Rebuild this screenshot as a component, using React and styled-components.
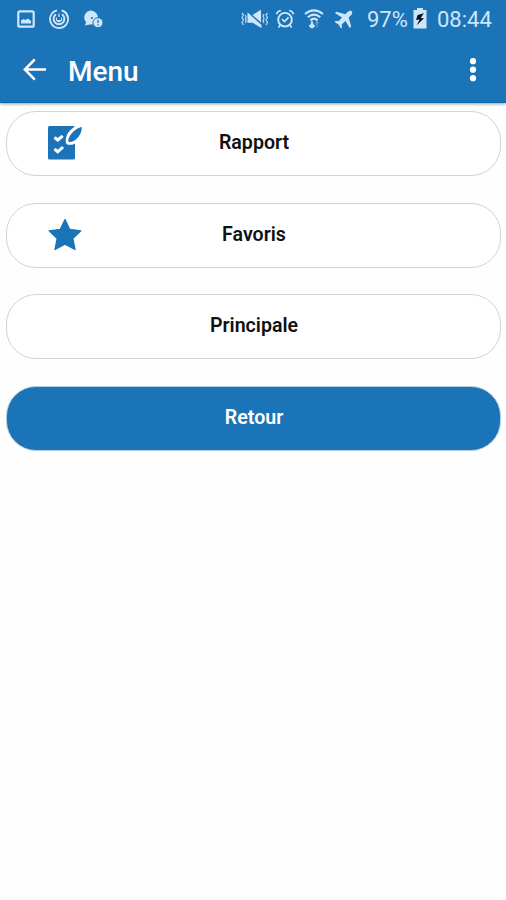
import React from 'react'
import styled, { createGlobalStyle } from 'styled-components'

const items = [
  { label: 'Rapport', icon: 'report' },
  { label: 'Favoris', icon: 'star' },
  { label: 'Principale' },
  { label: 'Retour', primary: true },
]

function StatusBar() {
  return (
    <Status>
      <StatusGroup $gap="14px">
        <svg width="18" height="18" viewBox="0 0 18 18">
          <rect x="1.3" y="1.3" width="15.4" height="15.4" rx="1.5" fill="none" stroke="currentColor" strokeWidth="2.2" />
          <path d="M4 13.5V10.5L6.5 9L8.5 10L11 8.5L14 11V13.5Z" fill="currentColor" />
        </svg>
        <svg width="20" height="20" viewBox="0 0 20 20" fill="none" stroke="currentColor">
          <path d="M8 1.3A9 9 0 1 0 12.5 1.4" strokeWidth="1.8" />
          <path d="M13.5 1.7A9 9 0 0 1 18.8 8" strokeWidth="1.8" />
          <path d="M7 5.4A5.4 5.4 0 1 0 13 5.4" strokeWidth="2" />
          <path d="M8 8A3 3 0 1 0 12 8V11H8Z" fill="currentColor" stroke="none" />
          <path d="M10 4.5V8" strokeWidth="1.2" />
        </svg>
        <svg width="21" height="20" viewBox="0 0 21 20">
          <path d="M8.5 1.5A7.3 7 0 1 1 6.5 15.5L2 16.5L3 13A7.3 7 0 0 1 8.5 1.5Z" fill="currentColor" />
          <circle cx="9" cy="9" r="1.1" fill="#1b74b7" />
          <circle cx="15" cy="13.7" r="5" fill="currentColor" stroke="#1b74b7" strokeWidth="1" />
          <path d="M15 10.8V14M15 15.2V16.6" stroke="#1b74b7" strokeWidth="1.3" />
        </svg>
      </StatusGroup>
      <StatusGroup>
        <svg width="28" height="20" viewBox="0 0 28 20">
          <path d="M6.5 3.2V13.8H11.5L20.5 19V16Z" fill="currentColor" />
          <path d="M11.5 6L20 .8V13.6Z" fill="currentColor" />
          <path d="M1 4L2.5 6L1 8.5L2.5 11L1 13.5L2.5 16M4.3 6L5.3 8L4.3 10L5.3 12L4.3 14M26.5 4L25 6L26.5 8.5L25 11L26.5 13.5L25 16M23 5L22 7L23 9.5L22 12L23 14" fill="none" stroke="currentColor" strokeWidth="1.3" opacity=".85" />
        </svg>
        <AlarmIcon width="20" height="20" viewBox="0 0 20 20" fill="none" stroke="currentColor">
          <circle cx="10" cy="10.7" r="6.8" strokeWidth="1.9" />
          <path d="M7 10L9.5 12.5L13.5 8.3" strokeWidth="1.7" />
          <path d="M1.5 5.3Q2.3 2 5.8 1.5M18.5 5.3Q17.7 2 14.2 1.5M5 16.2L3.5 18.5M15 16.2L16.5 18.5" strokeWidth="1.7" />
        </AlarmIcon>
        <WifiIcon width="20" height="20" viewBox="0 0 20 20" fill="none" stroke="currentColor">
          <path d="M1 5Q10 -2.4 19 5M3.8 8.3Q10 2.8 16.2 8.3M6.4 11.5Q10 7.8 13.6 11.5" strokeWidth="2.2" />
          <path d="M8 12.5V18M8 18.8L5.5 16M8 18.8L10.5 16" strokeWidth="2.2" />
          <path d="M13 18.5V12.5M13 12.5L11.5 14.5M13 12.5L14.7 14.5" strokeWidth="1" opacity=".45" />
        </WifiIcon>
        <PlaneIcon width="19" height="19" viewBox="0 0 19 19">
          <path d="M17.7 1.2C16.5 .2 14.9 .8 13.9 1.8L11.4 4.3L2.3 1.7L.9 3.1L8 7.6L4.6 11.3L1.7 10.8L.6 11.9L4.6 14.4L7 18.4L8.1 17.3L7.7 14.4L11.4 11L15.8 18L17.2 16.6L14.7 7.6L17.2 5.1C18.2 4.1 18.7 2.3 17.7 1.2Z" fill="currentColor" />
        </PlaneIcon>
        <StatusText $width="42px" $left="14px">97%</StatusText>
        <BatteryIcon width="14" height="21" viewBox="0 0 14 21">
          <path d="M4 0H10V2H13.5V20.5H.5V2H4Z" fill="currentColor" />
          <path d="M10.8 5.3L4.6 7L3 12L6.5 11.5L3.8 17.3L11 10.2L7.8 9.9Z" fill="#071422" />
        </BatteryIcon>
        <StatusText $width="56px" $left="10px">08:44</StatusText>
      </StatusGroup>
    </Status>
  )
}

function ReportIcon() {
  return (
    <svg width="36" height="36" viewBox="0 0 36 36">
      <rect x="1" y="1" width="27" height="33.5" rx="1.5" fill="#1b74b7" />
      <path d="M7.5 12.5L10.8 15L15.7 10.8M7.5 24L10.8 26.8L16 22" fill="none" stroke="#fff" strokeWidth="3" />
      <path d="M34 2C27.5 3 20 9.5 21.3 17.3C27.5 18.5 33.5 12 34 2Z" fill="#fff" stroke="#fff" strokeWidth="4.8" strokeLinejoin="round" />
      <path d="M34.8 2C32.5 2 25 6 22 12.5C20.6 15.8 21 17.6 23.8 17C30.2 15.2 35 9 34.8 2Z" fill="#1b74b7" />
    </svg>
  )
}

function StarIcon() {
  return (
    <svg width="36" height="36" viewBox="0 0 36 36">
      <path d="M18 3.6L22.8 13.5L33.8 14.8L25.8 22.5L28 33.5L18 28.2L8 33.5L10.2 22.5L2.2 14.8L13.2 13.5Z" fill="#1b74b7" stroke="#1b74b7" strokeWidth="1.3" strokeLinejoin="round" />
    </svg>
  )
}

function App() {
  return (
    <Page>
      <GlobalStyle />
      <Header>
        <StatusBar />
        <Toolbar>
          <IconButton aria-label="Retour">
            <svg width="24" height="24" viewBox="0 0 24 24" fill="none" stroke="currentColor" strokeWidth="2.5">
              <path d="M23 11.5H2M11.8 1.3L1.8 11.5L11.8 21.7" />
            </svg>
          </IconButton>
          <Title>Menu</Title>
          <IconButton aria-label="Options">
            <svg width="8" height="26" viewBox="0 0 8 26" fill="currentColor">
              <circle cx="4" cy="4.2" r="3.1" />
              <circle cx="4" cy="12.7" r="3.1" />
              <circle cx="4" cy="21.2" r="3.1" />
            </svg>
          </IconButton>
        </Toolbar>
      </Header>
      <MenuList>
        {items.map((item) => (
          <MenuButton key={item.label} $primary={item.primary}>
            <IconSlot>
              {item.icon === 'report' && <ReportIcon />}
              {item.icon === 'star' && <StarIcon />}
            </IconSlot>
            <Label>{item.label}</Label>
          </MenuButton>
        ))}
      </MenuList>
    </Page>
  )
}

export default App

const GlobalStyle = createGlobalStyle`
  * {
    box-sizing: border-box;
  }
  body {
    margin: 0;
    background: #fefefe;
    font-family: Roboto, "Liberation Sans", sans-serif;
  }
  svg {
    display: block;
    flex-shrink: 0;
  }
`

const Page = styled.div`
  min-height: 900px;
  background: #fefefe;
`

const Header = styled.header`
  height: 103px;
  background: #1b74b7;
  border-bottom: 1px solid #0a68b0;
  box-shadow: 0 1px 3px rgba(0, 0, 0, 0.4);
  color: #fff;
`

const Status = styled.div`
  height: 38px;
  padding: 0 13px 0 17px;
  display: flex;
  align-items: center;
  justify-content: space-between;
  color: #cfe6fa;
`

const StatusGroup = styled.div`
  display: flex;
  align-items: center;
  gap: ${props => props.$gap || 0};
`

const AlarmIcon = styled.svg`
  margin-left: 6px;
`

const WifiIcon = styled.svg`
  margin-left: 9px;
`

const PlaneIcon = styled.svg`
  margin-left: 10px;
`

const BatteryIcon = styled.svg`
  margin: 0 0 2px 4px;
`

const StatusText = styled.span`
  width: ${props => props.$width};
  margin-left: ${props => props.$left};
  font-size: 22px;
  line-height: 26px;
  white-space: nowrap;
  padding-top: 2px;
`

const Toolbar = styled.div`
  height: 64px;
  padding: 0 29px 0 23px;
  display: flex;
  align-items: center;
`

const IconButton = styled.button`
  padding: 0;
  border: 0;
  background: none;
  color: inherit;
`

const Title = styled.h1`
  flex: 1;
  margin: 0 0 0 21px;
  padding-top: 3px;
  font-size: 28px;
  font-weight: 500;
  line-height: 32px;
`

const MenuList = styled.main`
  padding: 8px 5px 0 6px;
  display: flex;
  flex-direction: column;
  gap: 26.5px;
`

const MenuButton = styled.button`
  width: 100%;
  height: 65px;
  padding: 0 39px 0 40px;
  display: grid;
  grid-template-columns: 36px 1fr 36px;
  align-items: center;
  border: 1.5px solid ${props => props.$primary ? '#b5cfe1' : '#d3d3d0'};
  border-radius: 30px;
  background: ${props => props.$primary ? '#1b74b7' : '#fff'};
  color: ${props => props.$primary ? '#fff' : '#111'};
  font-family: inherit;
`

const IconSlot = styled.span`
  display: flex;
  padding-bottom: 2px;
`

const Label = styled.span`
  padding-bottom: 1px;
  font-size: 19.6px;
  font-weight: 600;
  line-height: 24px;
  text-align: center;
`
